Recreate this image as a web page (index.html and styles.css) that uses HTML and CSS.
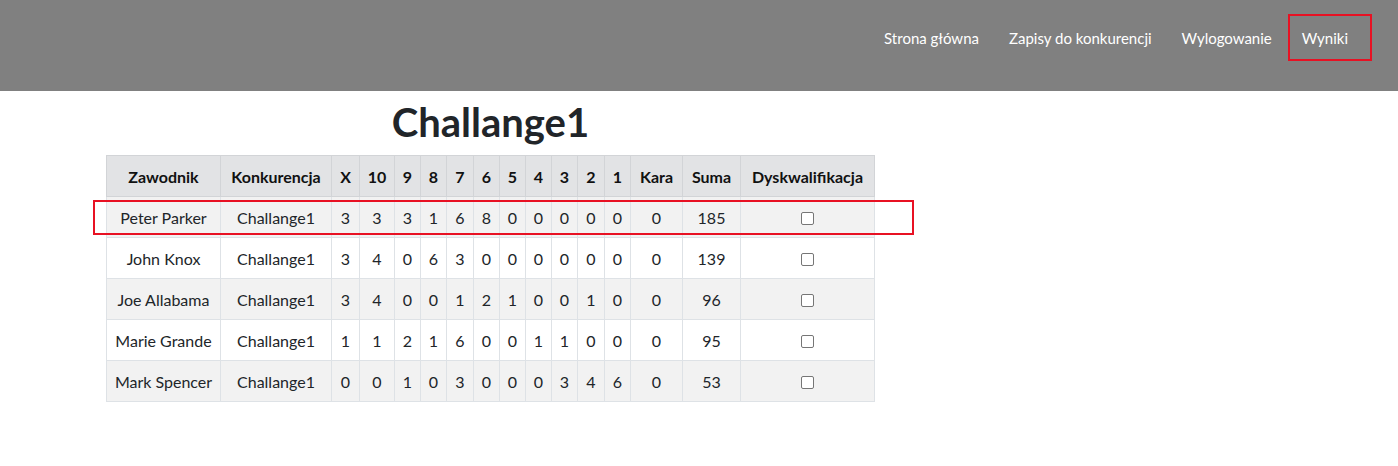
FILE: index.html
```html
<!DOCTYPE html>
<html lang="pl">
<head>
<meta charset="utf-8">
<title>Wyniki</title>
<link rel="stylesheet" href="styles.css">
</head>
<body>
<header class="navbar">
  <nav class="nav">
    <a class="nav-link" href="#">Strona główna</a>
    <a class="nav-link" href="#">Zapisy do konkurencji</a>
    <a class="nav-link" href="#">Wylogowanie</a>
    <a class="nav-link active" href="#">Wyniki</a>
  </nav>
</header>
<main class="content">
  <section class="results">
    <h1 class="title">Challange1</h1>
    <table class="table">
      <colgroup>
        <col style="width:114px"><col style="width:111px"><col style="width:28px"><col style="width:35px">
        <col style="width:26px"><col style="width:26px"><col style="width:27px"><col style="width:26px">
        <col style="width:26px"><col style="width:26px"><col style="width:26px"><col style="width:27px">
        <col style="width:26px"><col style="width:52px"><col style="width:58px"><col style="width:134px">
      </colgroup>
      <thead>
        <tr><th>Zawodnik</th><th>Konkurencja</th><th>X</th><th>10</th><th>9</th><th>8</th><th>7</th><th>6</th><th>5</th><th>4</th><th>3</th><th>2</th><th>1</th><th>Kara</th><th>Suma</th><th>Dyskwalifikacja</th></tr>
      </thead>
      <tbody>
        <tr class="highlight"><td>Peter Parker</td><td>Challange1</td><td>3</td><td>3</td><td>3</td><td>1</td><td>6</td><td>8</td><td>0</td><td>0</td><td>0</td><td>0</td><td>0</td><td>0</td><td>185</td><td><span class="check"></span></td></tr>
        <tr><td>John Knox</td><td>Challange1</td><td>3</td><td>4</td><td>0</td><td>6</td><td>3</td><td>0</td><td>0</td><td>0</td><td>0</td><td>0</td><td>0</td><td>0</td><td>139</td><td><span class="check"></span></td></tr>
        <tr><td>Joe Allabama</td><td>Challange1</td><td>3</td><td>4</td><td>0</td><td>0</td><td>1</td><td>2</td><td>1</td><td>0</td><td>0</td><td>1</td><td>0</td><td>0</td><td>96</td><td><span class="check"></span></td></tr>
        <tr><td>Marie Grande</td><td>Challange1</td><td>1</td><td>1</td><td>2</td><td>1</td><td>6</td><td>0</td><td>0</td><td>1</td><td>1</td><td>0</td><td>0</td><td>0</td><td>95</td><td><span class="check"></span></td></tr>
        <tr><td>Mark Spencer</td><td>Challange1</td><td>0</td><td>0</td><td>1</td><td>0</td><td>3</td><td>0</td><td>0</td><td>0</td><td>3</td><td>4</td><td>6</td><td>0</td><td>53</td><td><span class="check"></span></td></tr>
      </tbody>
    </table>
    <div class="row-mark"></div>
  </section>
</main>
</body>
</html>
```

FILE: styles.css
```css
* { box-sizing: border-box; }
html, body { margin: 0; padding: 0; }
body {
  font-family: Lato, "Noto Sans", "Liberation Sans", sans-serif;
  font-size: 16px;
  color: #212529;
  background: #fff;
}
.navbar {
  height: 91px;
  background: #808080;
  display: flex;
  justify-content: flex-end;
  padding: 14px 26px 0 0;
}
.nav {
  display: flex;
  align-items: flex-start;
}
.nav-link {
  display: block;
  color: #fff;
  text-decoration: none;
  font-size: 15px;
  line-height: 20px;
  padding: 14px 15px 13px;
  border-width: 0;
}
.nav-link.active {
  border: 2px solid #e81123;
  margin-left: 1px;
  padding: 12px 22px 11px 12px;
}
.content {
  padding-left: 106px;
}
.results {
  position: relative;
  display: inline-block;
}
.title {
  margin: 8px 0 10px;
  text-align: center;
  font-size: 40px;
  line-height: 46px;
  font-weight: 700;
  color: #212529;
}
.table {
  border-collapse: collapse;
  table-layout: fixed;
  width: 768px;
}
.table th, .table td {
  border: 1px solid #dee2e6;
  text-align: center;
  height: 41px;
  padding: 0;
  white-space: nowrap;
  font-size: 16px;
}
.table th {
  background: #e2e3e5;
  border-color: #d2d4d7;
  font-weight: 700;
  color: #111;
}
.table tbody tr:nth-child(odd) td {
  background: #f2f2f2;
}
.check {
  display: inline-block;
  width: 13px;
  height: 13px;
  border: 1px solid #767676;
  border-radius: 2px;
  background: #fff;
  vertical-align: -1px;
}
.row-mark {
  position: absolute;
  left: -13px;
  top: 109px;
  width: 821px;
  height: 35px;
  border: 2px solid #e81123;
  pointer-events: none;
}
```
